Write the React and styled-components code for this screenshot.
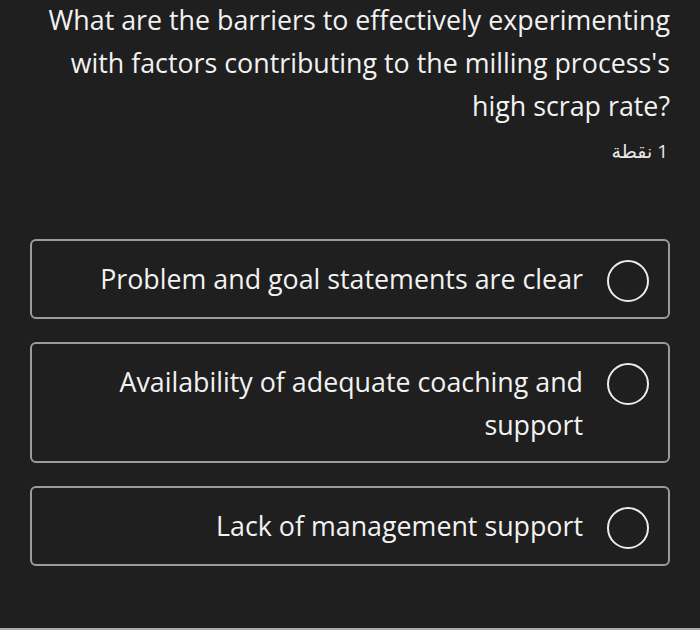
import React from "react";
import styled, { createGlobalStyle } from "styled-components";

const Global = createGlobalStyle`
  html, body { margin: 0; padding: 0; background: #1f1f1f; }
  body { font-family: "Open Sans", "Noto Sans", sans-serif; }
`;

const Page = styled.div`
  width: 700px;
  height: 630px;
  box-sizing: border-box;
  background: #1f1f1f;
  border-bottom: 2px solid #a9a9a9;
  padding: 0 30px 0 30px;
  display: flex;
  flex-direction: column;
  overflow: hidden;
`;

const Question = styled.div`
  color: #f2f2f2;
  font-size: 26.8px;
  line-height: 43px;
  text-align: right;
  margin-top: -2px;
  white-space: nowrap;
`;

const Points = styled.div`
  color: #e8e8e8;
  font-family: "Open Sans", "DejaVu Sans", sans-serif;
  font-size: 19px;
  line-height: 24px;
  text-align: right;
  margin-top: 12px;
  padding-right: 2px;
`;

const Options = styled.div`
  display: flex;
  flex-direction: column;
  gap: 23px;
  margin-top: 76px;
`;

const Option = styled.label`
  display: flex;
  align-items: flex-start;
  justify-content: flex-end;
  gap: 24px;
  border: 2px solid #9b9b9b;
  border-radius: 6px;
  padding: 16px 19px 15px 60px;
`;

const OptionText = styled.span`
  color: #f2f2f2;
  font-size: 26.8px;
  line-height: 43px;
  text-align: right;
  max-width: 500px;
`;

const Radio = styled.span`
  flex: none;
  width: 38px;
  height: 38px;
  border: 2px solid #ececec;
  border-radius: 50%;
  margin-top: 3px;
`;

const options = [
  "Problem and goal statements are clear",
  "Availability of adequate coaching and support",
  "Lack of management support",
];

export default function App() {
  return (
    <>
      <Global />
      <Page>
        <Question>
          What are the barriers to effectively experimenting
          <br />
          with factors contributing to the milling process's
          <br />
          high scrap rate?
        </Question>
        <Points>
          <span dir="rtl">1 نقطة</span>
        </Points>
        <Options>
          {options.map((o) => (
            <Option key={o}>
              <OptionText>{o}</OptionText>
              <Radio />
            </Option>
          ))}
        </Options>
      </Page>
    </>
  );
}
